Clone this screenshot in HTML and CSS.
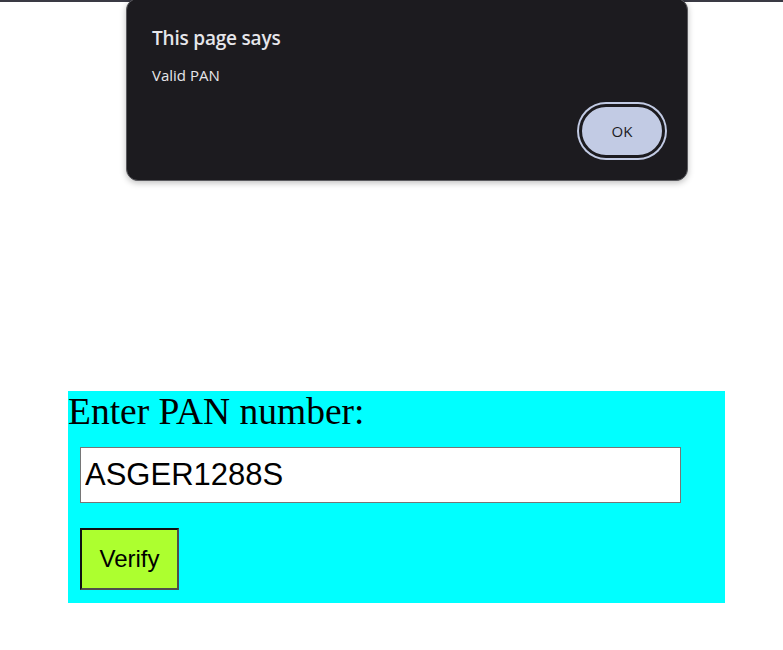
FILE: index.html
```html
<!DOCTYPE html>
<html>
<head>
<meta charset="utf-8">
<link rel="stylesheet" href="styles.css">
</head>
<body>
<div class="topline"></div>
<main class="page">
  <form class="pan-box">
    <label class="pan-label" for="pan">Enter PAN number:</label>
    <input class="pan-input" id="pan" type="text" value="ASGER1288S">
    <button class="verify" type="button">Verify</button>
  </form>
</main>
<div class="dialog">
  <div class="dialog-title">This page says</div>
  <div class="dialog-msg">Valid PAN</div>
  <div class="dialog-actions">
    <button class="ok" type="button">OK</button>
  </div>
</div>
</body>
</html>
```
FILE: styles.css
```css
html, body {
  margin: 0;
  padding: 0;
  background: #ffffff;
}
body {
  font-family: "Liberation Serif", "Times New Roman", serif;
  position: relative;
  min-height: 650px;
}
.topline {
  height: 2px;
  background: #3a3a44;
}
.page {
  padding: 389px 0 0 68px;
}
.pan-box {
  width: 657px;
  height: 212px;
  background: #00ffff;
  display: flex;
  flex-direction: column;
  align-items: flex-start;
  margin: 0;
}
.pan-label {
  display: block;
  font-family: "Liberation Serif", "Times New Roman", serif;
  font-size: 37.5px;
  line-height: 42px;
  color: #000;
}
.pan-input {
  box-sizing: border-box;
  width: 601px;
  height: 56px;
  margin: 14px 0 0 12px;
  border: 1px solid #767676;
  padding: 0 4px;
  font-family: "Liberation Sans", Arial, sans-serif;
  font-size: 31px;
  color: #000;
  background: #fff;
  outline: none;
}
.verify {
  box-sizing: border-box;
  width: 99px;
  height: 62px;
  margin: 25px 0 0 12px;
  background: #adff2f;
  border: 2px solid;
  border-color: #111 #4d4d4d #4d4d4d #111;
  font-family: "Liberation Sans", Arial, sans-serif;
  font-size: 24px;
  color: #000;
  padding: 0;
}
.dialog {
  position: absolute;
  left: 126px;
  top: -2px;
  width: 562px;
  height: 183px;
  box-sizing: border-box;
  background: #1c1b1f;
  border: 1px solid #5a5a5e;
  border-radius: 12px;
  box-shadow: 0 2px 6px rgba(0,0,0,0.25);
  padding: 26px 22px 0 25px;
  font-family: "Open Sans", "Noto Sans", sans-serif;
  color: #e6e6ea;
}
.dialog-title {
  font-size: 19px;
  font-weight: 600;
  line-height: 26px;
  letter-spacing: -0.2px;
}
.dialog-msg {
  font-size: 15px;
  line-height: 20px;
  margin-top: 14px;
}
.dialog-actions {
  display: flex;
  justify-content: flex-end;
  margin-top: 19px;
}
.ok {
  box-sizing: border-box;
  width: 86px;
  height: 54px;
  border-radius: 27px;
  background: #c2cbe4;
  border: 3px solid #1c1b1f;
  box-shadow: 0 0 0 2px #c2cbe4;
  font-family: "Open Sans", "Noto Sans", sans-serif;
  font-size: 15px;
  color: #1c1b1f;
  padding: 0;
}
```
